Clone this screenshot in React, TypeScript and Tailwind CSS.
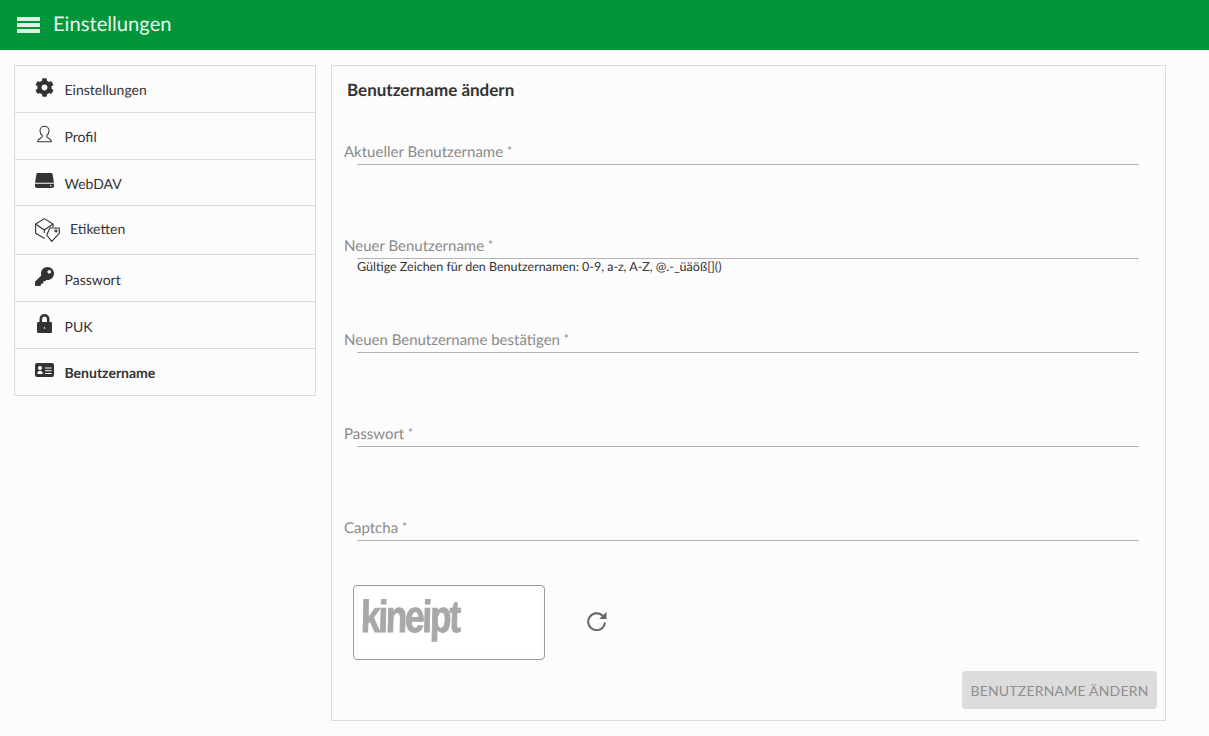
import type { ReactNode } from 'react'
import { FaCog, FaKey } from 'react-icons/fa'

const ProfileIcon = () => (
  <svg viewBox="0 0 16 18" className="h-[18px] w-[15px]" fill="none" stroke="#333333" strokeWidth="1.100" strokeLinejoin="round">
    <path d="M8 .7c2.800 0 4.800 2.100 4.800 4.800 0 2.200-1.100 4-2.300 5v1.400c0 .8 1 1.300 2.300 1.900 1.400.7 2.400 1.300 2.500 3.400H.7c.1-2.100 1.100-2.700 2.500-3.400 1.300-.6 2.300-1.100 2.300-1.900v-1.400C4.300 9.500 3.200 7.700 3.200 5.500 3.200 2.800 5.200.7 8 .7z" />
  </svg>
)

const DriveIcon = () => (
  <svg viewBox="0 0 19 15" className="h-[15px] w-[19px]" fill="#333333">
    <path d="M2.800 0h13.400c.7 0 1.200.4 1.300 1L19 9.700H0L1.500 1c.1-.6.600-1 1.300-1z" />
    <path d="M0 10.700h19v2.300c0 1.100-.9 2-2 2H2c-1.100 0-2-.9-2-2z" />
    <circle cx="15.800" cy="12.800" r=".8" fill="#fcfcfc" />
  </svg>
)

const LabelsIcon = () => (
  <svg viewBox="0 0 25 24" className="h-[24px] w-[25px]" fill="none" stroke="#333333" strokeWidth="1.100" strokeLinejoin="round">
    <path d="M9.300.6 18 6l-8.700 6L.6 6z" />
    <path d="M.6 6v9.200l9 5.300" />
    <path d="M9.300 12v3" />
    <path d="M18 6v3" />
    <path d="M15 10h9.300v5.300l-7.600 8-5-6.300z" />
    <circle cx="21" cy="12.800" r="1.100" />
  </svg>
)

const LockIcon = () => (
  <svg viewBox="0 0 15 19" className="h-[19px] w-[15px]" fill="none">
    <path d="M3.800 9V5a3.700 3.700 0 0 1 7.400 0v4" stroke="#333333" strokeWidth="2.600" />
    <rect x="0" y="8" width="15" height="11" rx="1.200" fill="#333333" />
    <circle cx="7.500" cy="14" r=".8" fill="#fcfcfc" />
  </svg>
)

const IdCardIcon = () => (
  <svg viewBox="0 0 19 14" className="h-[14px] w-[19px]">
    <rect width="19" height="14" rx="2" fill="#333333" />
    <circle cx="5" cy="5" r="2" fill="#fcfcfc" />
    <path d="M2.300 11c0-2.200 1.200-3.300 2.700-3.300s2.700 1.100 2.700 3.300z" fill="#fcfcfc" />
    <path d="M10 5h6.500M10 7.700h6.500M10 10.500h6.500" stroke="#fcfcfc" strokeWidth="1.100" />
  </svg>
)

const RefreshIcon = () => (
  <svg viewBox="0 0 20 20" className="h-[20px] w-[20px]" fill="none" stroke="#666666" strokeWidth="2">
    <path d="M16 5.200A8.400 8.400 0 1 0 18 11.500" />
    <path d="M19.500.7v7.300h-7.300z" fill="#666666" stroke="none" />
  </svg>
)

const menuItems: {
  label: string
  icon: ReactNode
  height: string
  iconShift: string
  textShift?: string
  gap?: string
  active?: boolean
}[] = [
  { label: 'Einstellungen', icon: <FaCog className="h-[19px] w-[19px] text-[#333]" />, height: 'h-[47px]', iconShift: '-translate-y-[2px]' },
  { label: 'Profil', icon: <div className="pl-[2px]"><ProfileIcon /></div>, height: 'h-[47px]', iconShift: '-translate-y-[2px]' },
  { label: 'WebDAV', icon: <DriveIcon />, height: 'h-[46px]', iconShift: '-translate-y-[2px]', textShift: 'translate-y-[1px]' },
  { label: 'Etiketten', icon: <LabelsIcon />, height: 'h-[49px]', iconShift: 'translate-y-0', textShift: '-translate-y-[2px]', gap: 'w-[35px]' },
  { label: 'Passwort', icon: <FaKey className="h-[19px] w-[19px] text-[#333]" />, height: 'h-[47px]', iconShift: '-translate-y-[2px]', textShift: 'translate-y-[1px]' },
  { label: 'PUK', icon: <div className="pl-[2px]"><LockIcon /></div>, height: 'h-[47px]', iconShift: '-translate-y-[2px]', textShift: 'translate-y-[1px]' },
  { label: 'Benutzername', icon: <IdCardIcon />, height: 'h-[47px]', iconShift: '-translate-y-[2px]', active: true },
]

const fields = [
  { label: 'Aktueller Benutzername' },
  { label: 'Neuer Benutzername', hint: 'Gültige Zeichen für den Benutzernamen: 0-9, a-z, A-Z, @.-_üäöß[]()' },
  { label: 'Neuen Benutzername bestätigen' },
  { label: 'Passwort' },
  { label: 'Captcha' },
]

export default function App() {
  return (
    <div className="h-[736px] overflow-hidden bg-[#fcfcfc] font-['Lato','Carlito',sans-serif] text-[#333] [text-rendering:geometricPrecision]">
      <header className="flex h-[50px] items-center bg-[#009639] pl-[17px] text-[#e6f5ec]">
        <div className="flex w-[23px] flex-col gap-[2px]">
          <span className="h-[4px] bg-[#dff2e6]" />
          <span className="h-[4px] bg-[#dff2e6]" />
          <span className="h-[4px] bg-[#dff2e6]" />
        </div>
        <h1 className="ml-[13px] pb-[2px] text-[20.2px]">Einstellungen</h1>
      </header>

      <div className="flex items-start pt-[15px] pl-[14px]">
        <nav className="w-[302px] border border-b-0 border-[#dcdcdc]">
          {menuItems.map((item) => (
            <div key={item.label} className={`flex items-center border-b border-[#dcdcdc] pl-5 ${item.height}`}>
              <div className={`flex items-center ${item.iconShift} ${item.gap ?? 'w-[29.5px]'}`}>{item.icon}</div>
              <span className={`text-[14px] ${item.textShift ?? ''} ${item.active ? 'font-bold' : ''}`}>{item.label}</span>
            </div>
          ))}
        </nav>

        <main className="ml-[15px] h-[656px] w-[835px] border border-[#dcdcdc]">
          <h2 className="pt-[13px] pl-[15px] text-[17px] leading-[22px] font-bold">Benutzername ändern</h2>
          <div className="mt-[40px] mr-[26px] ml-[25px]">
            {fields.map((field) => (
              <div key={field.label} className="h-[94px]">
                <div className="h-[24px] border-b border-[#b4b4b4] pt-[1px] text-[15px] leading-[21px] text-[#8a8a8a]">
                  <span className="-ml-[13px]">
                    {field.label} <span className="align-[2px] text-[12px] leading-[0]">*</span>
                  </span>
                </div>
                {field.hint && <p className="text-[12.5px] leading-[16px] text-[#333]">{field.hint}</p>}
              </div>
            ))}
          </div>
          <div className="mt-[-26px] ml-[21px] flex items-center">
            <div className="h-[75px] w-[192px] rounded border border-[#999] bg-[#fcfcfc] p-[4px]">
              <div className="h-full overflow-hidden bg-white pt-[2px] pl-[3px] font-['Liberation_Sans',sans-serif] text-[45px] leading-[50px] font-bold text-[#a8a8a8] blur-[0.4px] [-webkit-text-stroke:1px_#a8a8a8]">
                <span className="inline-block origin-left scale-x-[0.78] -skew-x-[2deg] tracking-[-2.8px]">kineipt</span>
              </div>
            </div>
            <div className="mb-[3px] ml-[42px]">
              <RefreshIcon />
            </div>
          </div>
          <div className="mt-[11px] mr-2 flex justify-end">
            <button
              type="button"
              className="h-[38px] w-[195px] rounded-sm bg-[#dcdcdc] text-[14px] tracking-[0.2px] text-[#8f8f8f]"
            >
              BENUTZERNAME ÄNDERN
            </button>
          </div>
        </main>
      </div>
    </div>
  )
}
